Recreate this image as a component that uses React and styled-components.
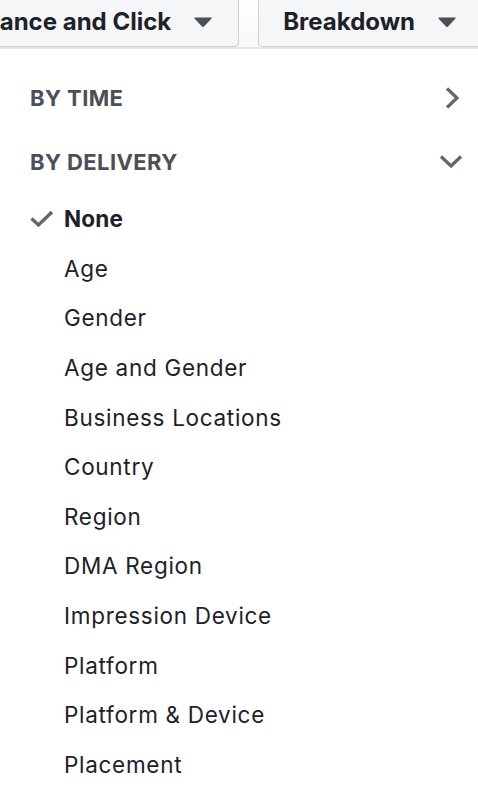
import React from 'react'
import styled, { createGlobalStyle } from 'styled-components'

const GlobalStyle = createGlobalStyle`
  body {
    margin: 0;
    background: #fff;
    overflow: hidden;
    font-family: Inter, "Liberation Sans", Arial, sans-serif;
  }
`

const groups = [
  { label: 'By Time', open: false },
  { label: 'By Delivery', open: true },
]

const items = [
  'None',
  'Age',
  'Gender',
  'Age and Gender',
  'Business Locations',
  'Country',
  'Region',
  'DMA Region',
  'Impression Device',
  'Platform',
  'Platform & Device',
  'Placement',
]

const Caret = () => (
  <svg width='20' height='12' viewBox='0 0 20 12'>
    <path d='M2 1.5 H18 Q19.3 1.5 18.3 2.7 L11 10.4 Q10 11.4 9 10.4 L1.7 2.7 Q0.7 1.5 2 1.5 Z' fill='#4b4f56' />
  </svg>
)

const Chevron = ({ open }) => (
  <svg width='24' height='24' viewBox='0 0 24 24'>
    {open
      ? <polyline points='2,6.5 12,16 22,6.5' fill='none' stroke='#606770' strokeWidth='3.2' />
      : <polyline points='8,2.5 18,12 8,21.5' fill='none' stroke='#606770' strokeWidth='3.2' />}
  </svg>
)

const Check = () => (
  <svg width='24' height='18' viewBox='0 0 24 18'>
    <polyline points='1.5,8.5 8.5,15 22,2' fill='none' stroke='#606770' strokeWidth='3.4' />
  </svg>
)

const App = () => {
  return (
    <Wrapper>
      <GlobalStyle />
      <Toolbar>
        <DropButton $right={25}>
          Performance and Click
          <Caret />
        </DropButton>
        <DropButton $right={26}>
          Breakdown
          <Caret />
        </DropButton>
      </Toolbar>
      <Menu>
        {groups.map((g) => (
          <GroupRow key={g.label}>
            <GroupTitle>{g.label}</GroupTitle>
            <Chevron open={g.open} />
          </GroupRow>
        ))}
        <ul>
          {items.map((name, index) => (
            <Item key={name} $selected={index === 0}>
              <CheckCell>{index === 0 && <Check />}</CheckCell>
              {name}
            </Item>
          ))}
        </ul>
      </Menu>
    </Wrapper>
  )
}

const Wrapper = styled.div`
  width: 478px;
  height: 794px;
  overflow: hidden;
`

const Toolbar = styled.div`
  display: flex;
  justify-content: flex-end;
  gap: 19px;
  height: 47px;
  margin-right: -6px;
  border-bottom: 2px solid #e4e6e9;
  background: linear-gradient(#fff, #f7f8f9);
`

const DropButton = styled.button`
  flex: none;
  display: flex;
  align-items: center;
  gap: 22px;
  height: 51px;
  margin-top: -4px;
  padding: 0 ${(p) => p.$right}px 0 24px;
  background: #f5f6f7;
  border: 1px solid #ccd0d5;
  border-radius: 4px;
  font-family: Inter, "Liberation Sans", Arial, sans-serif;
  font-size: 24px;
  font-weight: 700;
  color: #1d2129;
  white-space: nowrap;

  svg {
    flex: none;
  }
`

const Menu = styled.div`
  padding: 17px 0 0 30px;

  ul {
    list-style: none;
    margin: 0;
    padding: 0;
  }
`

const GroupRow = styled.div`
  display: flex;
  align-items: center;
  justify-content: space-between;
  height: 64px;
  padding-right: 15px;
`

const GroupTitle = styled.div`
  font-size: 22px;
  font-weight: 700;
  letter-spacing: 0.4px;
  text-transform: uppercase;
  color: #4b4f56;
`

const Item = styled.li`
  display: flex;
  align-items: center;
  height: 49.6px;
  font-size: 22.5px;
  letter-spacing: ${(p) => (p.$selected ? '0.2px' : '0.7px')};
  font-weight: ${(p) => (p.$selected ? 700 : 400)};
  color: #1d2129;
`

const CheckCell = styled.span`
  display: flex;
  align-items: center;
  width: 34px;
  flex: none;
`

export default App
